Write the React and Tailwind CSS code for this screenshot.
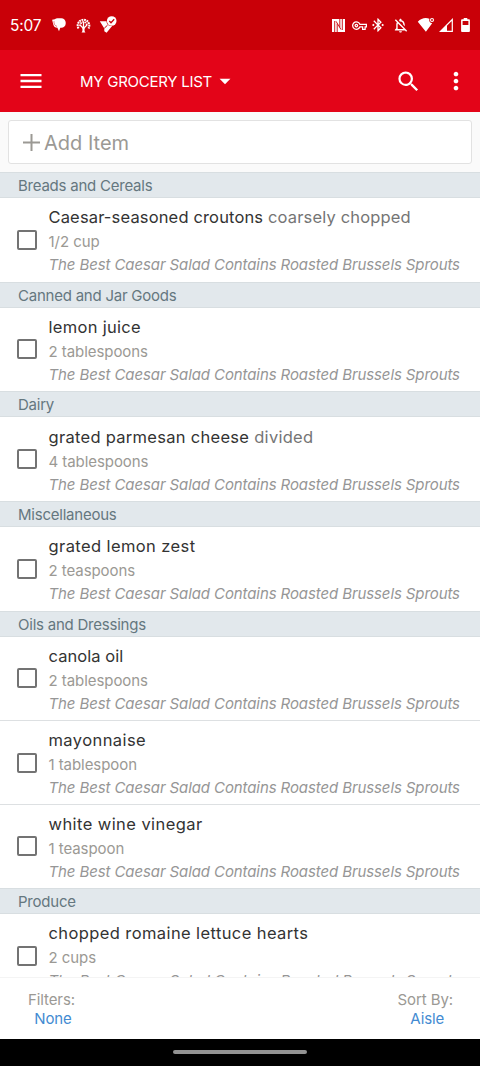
import { MdMenu, MdSearch, MdMoreVert, MdArrowDropDown, MdBluetoothConnected, MdOutlineVpnKey, MdOutlineNotificationsOff } from 'react-icons/md';

const SOURCE = 'The Best Caesar Salad Contains Roasted Brussels Sprouts';

const sections = [
  {
    name: 'Breads and Cereals',
    items: [{ name: 'Caesar-seasoned croutons', note: 'coarsely chopped', amount: '1/2 cup', tracking: 'tracking-[0.15px]' }],
  },
  { name: 'Canned and Jar Goods', items: [{ name: 'lemon juice', amount: '2 tablespoons', tracking: 'tracking-[0.3px]' }] },
  { name: 'Dairy', items: [{ name: 'grated parmesan cheese', note: 'divided', amount: '4 tablespoons', tracking: 'tracking-[0.29px]' }] },
  { name: 'Miscellaneous', items: [{ name: 'grated lemon zest', amount: '2 teaspoons', tracking: 'tracking-[0.4px]' }] },
  {
    name: 'Oils and Dressings',
    items: [
      { name: 'canola oil', amount: '2 tablespoons', tracking: 'tracking-[0.05px]' },
      { name: 'mayonnaise', amount: '1 tablespoon', tracking: 'tracking-[0.42px]' },
      { name: 'white wine vinegar', amount: '1 teaspoon', tracking: 'tracking-[0.42px]' },
    ],
  },
  { name: 'Produce', items: [{ name: 'chopped romaine lettuce hearts', amount: '2 cups', tracking: 'tracking-[0.4px]' }] },
];

function ChatIcon() {
  return (
    <svg width="14" height="14" viewBox="0 0 14 14" fill="currentColor">
      <path d="M2.800 1.200C3.500.5 4.500.2 5.500.2h3.800a4.400 4.400 0 0 1 4.400 4.400v.8a4.400 4.400 0 0 1-4.400 4.400h-1L7 13.200 5.400 9.800A4.500 4.500 0 0 1 1.300 6.500L.1 1.800z" />
      <path d="M2 3.200C1.700 5.500 2.700 7.800 5 8.400" fill="none" stroke="#c90008" strokeWidth=".5" />
    </svg>
  );
}

function TreeIcon() {
  return (
    <svg width="15" height="15" viewBox="0 0 15 15" fill="none" stroke="currentColor">
      <path d="M7.500 4v7M7.500 10.500 4 7M7.500 10.500 11 7" strokeWidth="1.300" />
      <path d="M5.500 14.600c1-1 1.200-2.500.8-4.600h2.400c-.4 2.100-.2 3.600.8 4.600z" fill="currentColor" stroke="none" />
      <path d="M2.500 10.500A5.800 5.800 0 1 1 12.500 10.500" strokeWidth="2.100" strokeDasharray="1.800 .7" />
      <path d="M4.300 8A3.300 3.300 0 1 1 10.700 8" strokeWidth="1.800" strokeDasharray="1.500 .8" />
    </svg>
  );
}

function SentIcon() {
  return (
    <svg width="18" height="18" viewBox="0 0 18 18">
      <path d="M.8 5.200h6.700c.2 3.500 2.300 4.700 5.600 4.700L7.600 16.700 5.300 15.200V12.500z" fill="currentColor" />
      <path d="M5.300 12.200 8.500 9.200" stroke="#c90008" strokeWidth="1" />
      <circle cx="12.700" cy="5" r="4.800" fill="currentColor" />
      <path d="m10.300 5 1.700 1.700 3.200-3.400" fill="none" stroke="#c90008" strokeWidth="1.300" />
    </svg>
  );
}

function NfcIcon() {
  return (
    <svg width="13" height="13" viewBox="0 0 13 13">
      <path d="M0 0h13v13H0z" fill="currentColor" />
      <path d="M2.700 2v11M5.200 13V4.700M4 2.300l5 8.200M7.800 0v8.300M10.300 0v11" fill="none" stroke="#c90008" strokeWidth=".9" />
    </svg>
  );
}

function WifiIcon() {
  return (
    <svg width="18" height="16" viewBox="0 0 18 16" fill="currentColor">
      <path d="M.8 4.700C4.200.8 9 .2 12.400 1.700c-.6 2.300.3 4.300 2.800 4.600L8.900 14.800z" />
      <circle cx="15" cy="3" r="1.500" fill="none" stroke="currentColor" strokeWidth="1.100" />
    </svg>
  );
}

function SignalIcon() {
  return (
    <svg width="15" height="15" viewBox="0 0 15 15">
      <path d="M1.500 13.400 13.300 1.500v11.900z" fill="none" stroke="currentColor" strokeWidth="1.200" />
      <path d="M.5 14 8 6.500V14z" fill="currentColor" />
    </svg>
  );
}

function BatteryIcon() {
  return (
    <svg width="9" height="14" viewBox="0 0 9 14" fill="currentColor" fillRule="evenodd">
      <path d="M2.700 0h3.600v1.300H8a.9.9 0 0 1 .9.900v10.900a.9.9 0 0 1-.9.900H1a.9.9 0 0 1-.9-.9V2.200A.9.900 0 0 1 1 1.300h1.700zM1.600 3v4h5.800V3z" />
    </svg>
  );
}

function StatusBar() {
  return (
    <div className="h-[50px] shrink-0 bg-[#c90008] text-white flex items-center justify-between px-[10px]">
      <div className="flex items-center">
        <span className="w-[42px] pt-[2px] text-[15.500px] leading-none tracking-[-0.2px]">5:07</span>
        <ChatIcon />
        <span className="ml-[10px]"><TreeIcon /></span>
        <span className="ml-[8px]"><SentIcon /></span>
      </div>
      <div className="flex items-center">
        <NfcIcon />
        <MdOutlineVpnKey size={15} className="ml-[7px]" />
        <MdBluetoothConnected size={16} className="ml-[3px]" />
        <MdOutlineNotificationsOff size={17} className="ml-[6px]" />
        <span className="ml-[8px]"><WifiIcon /></span>
        <span className="ml-[4px]"><SignalIcon /></span>
        <span className="ml-[7px]"><BatteryIcon /></span>
      </div>
    </div>
  );
}

function Header() {
  return (
    <header className="h-[62px] shrink-0 bg-[#e30418] text-white flex items-center pl-[17px] pr-[10px]">
      <MdMenu size={28} />
      <h1 className="ml-[35px] w-[132px] text-[15px] leading-none tracking-[-0.25px] whitespace-nowrap">MY GROCERY LIST</h1>
      <MdArrowDropDown size={26} />
      <MdSearch size={27} className="ml-auto" />
      <MdMoreVert size={28} className="ml-[20px]" />
    </header>
  );
}

function Item({ item }) {
  return (
    <li className="h-[83.700px] bg-white border-t border-[#dde0e2] flex items-center pl-[16.500px] first:border-t-0">
      <span className="w-5 h-5 shrink-0 rounded-[2px] border-2 border-[#737373]" />
      <div className="ml-[12px] pt-[2px] whitespace-nowrap">
        <p className={`text-[16.500px] leading-[25px] text-[#333] ${item.tracking}`}>
          {item.name} {item.note && <span className="text-[#757575]">{item.note}</span>}
        </p>
        <p className="text-[15px] leading-[23px] tracking-[-0.06px] text-[#9b9994]">{item.amount}</p>
        <p className="text-[15px] leading-[23px] tracking-[-0.1px] italic text-[#969696]">{SOURCE}</p>
      </div>
    </li>
  );
}

export default function App() {
  return (
    <div className="w-[480px] h-[1066px] overflow-hidden flex flex-col bg-white font-['Inter',sans-serif]">
      <StatusBar />
      <Header />
      <div className="h-[59.900px] shrink-0 bg-[#fafafa] px-2 pt-2">
        <div className="h-[44px] bg-white border border-[#e2e2e2] rounded-[3px] flex items-center pl-[14px] text-[#9b9994]">
          <svg width="17" height="17" viewBox="0 0 17 17" stroke="currentColor" strokeWidth="2">
            <path d="M8.500 0v17M0 8.500h17" />
          </svg>
          <span className="ml-[4px] pt-px text-[20px]">Add Item</span>
        </div>
      </div>
      <main className="h-[805.100px] shrink-0 overflow-hidden">
        {sections.map(section => (
          <section key={section.name}>
            <h2 className="h-[26px] bg-[#e2e8ec] border-y border-[#d8dee1] pl-[18px] text-[15px] leading-[26px] tracking-[-0.23px] text-[#65777f]">{section.name}</h2>
            <ul>
              {section.items.map(item => <Item key={item.name} item={item} />)}
            </ul>
          </section>
        ))}
      </main>
      <footer className="h-[62px] shrink-0 border-t border-[#f4f4f4] bg-white flex justify-between items-center pt-px pl-[28px] pr-[27px] text-[15px] leading-[19px] tracking-[-0.1px] text-center text-[#9b9994]">
        <div>
          <p>Filters:</p>
          <p className="ml-[3px] text-[#438bd2]">None</p>
        </div>
        <div>
          <p>Sort By:</p>
          <p className="ml-[4px] text-[#438bd2]">Aisle</p>
        </div>
      </footer>
      <div className="h-[27px] shrink-0 bg-black flex justify-center items-center">
        <span className="w-[134px] h-[4px] rounded-full bg-[#929292]" />
      </div>
    </div>
  );
}
